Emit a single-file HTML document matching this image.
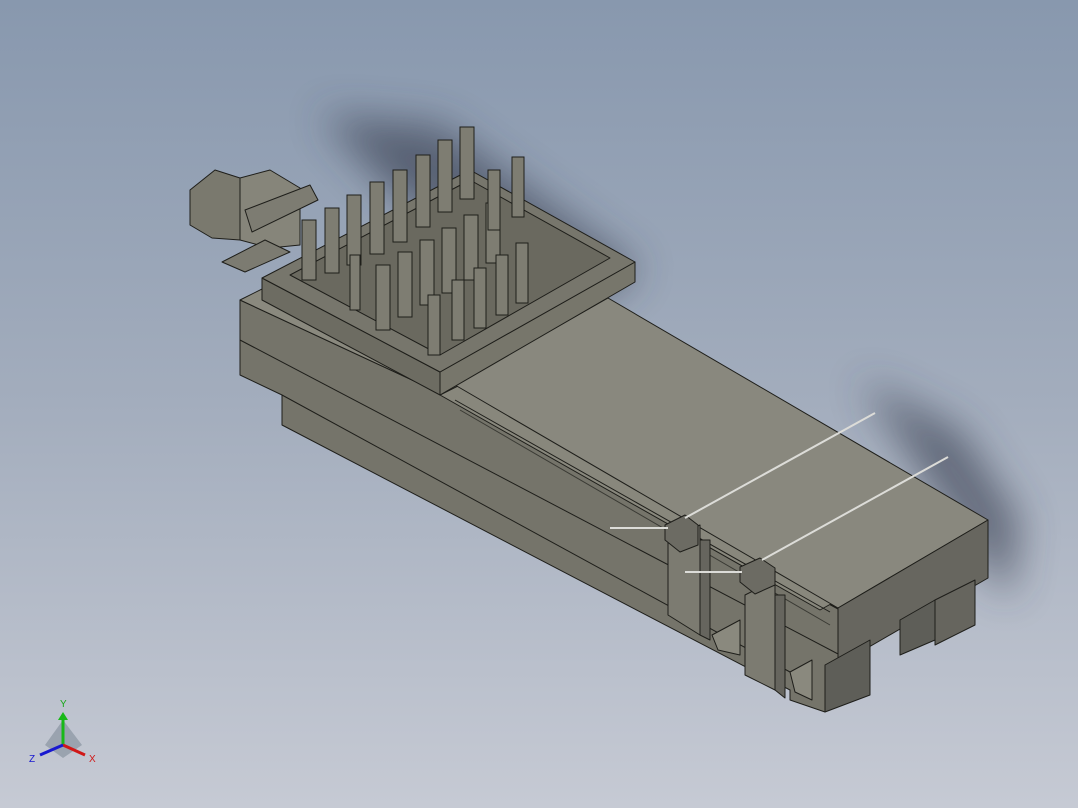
<!DOCTYPE html><html><head><style>html,body{margin:0;padding:0;width:1078px;height:808px;overflow:hidden}</style></head><body>
<svg width="1078" height="808" viewBox="0 0 1078 808" xmlns="http://www.w3.org/2000/svg" font-family="Liberation Sans, sans-serif">
<defs>
<linearGradient id="bg" x1="0" y1="0" x2="0" y2="1"><stop offset="0" stop-color="#8898ae"/><stop offset="0.5" stop-color="#a3adbd"/><stop offset="1" stop-color="#c6cad4"/></linearGradient>
<filter id="bl" x="-50%" y="-50%" width="200%" height="200%"><feGaussianBlur stdDeviation="20"/></filter>
</defs>
<rect width="1078" height="808" fill="url(#bg)"/>
<!-- shadow -->
<g filter="url(#bl)" opacity="0.6">
<polygon points="320,115 440,125 640,270 600,300 400,200" fill="#30384a"/>
<polygon points="860,380 960,430 1020,520 1010,600 980,560" fill="#30384a"/>
</g>
<g stroke="#1e1e1a" stroke-width="1" stroke-linejoin="round">
<polygon points="240,300 455,400 840,610 840,665 825,672 825,712 790,700 790,690 282,425 282,395 240,375" fill="#75746a"/>
<polyline points="240,340 840,655" fill="none"/>
<polyline points="282,395 790,672" fill="none"/>
<polygon points="240,300 270,285 455,385 838,608 840,610 455,400" fill="#8a897e"/>
<polygon points="440,395 470,380 838,600 820,610" fill="#88877c"/>
<polyline points="455,400 830,612" fill="none"/>
<polyline points="460,410 830,625" fill="none" stroke="#3a3a34"/>
<polygon points="455,385 608,298 988,520 838,608" fill="#89887e"/>
<polygon points="838,608 988,520 988,578 838,665" fill="#67665f"/>
<polygon points="825,665 870,640 870,695 825,712" fill="#5e5e58"/>
<polygon points="900,620 935,600 935,640 900,655" fill="#5e5e58"/>
<polygon points="935,600 975,580 975,625 935,645" fill="#66655e"/>
<polygon points="668,540 700,525 700,635 668,615" fill="#7c7b71"/>
<polygon points="700,540 710,540 710,640 700,635" fill="#66655e"/>
<polygon points="745,595 775,580 775,690 745,675" fill="#7c7b71"/>
<polygon points="775,595 785,595 785,698 775,690" fill="#66655e"/>
<polygon points="712,635 740,620 740,655 718,650" fill="#8a897e"/>
<polygon points="790,672 812,660 812,700 795,692" fill="#8a897e"/>
<polygon points="665,525 685,515 698,525 698,545 680,552 665,540" fill="#6c6b63"/>
<polygon points="740,567 760,558 775,568 775,585 755,594 740,582" fill="#6c6b63"/>
<polygon points="262,278 440,372 440,395 262,300" fill="#6d6c62"/>
<polygon points="440,372 635,262 635,282 440,395" fill="#77766b"/>
<polygon points="262,278 470,170 635,262 440,372" fill="#77766c"/>
<polygon points="290,275 470,180 610,258 440,355" fill="#6a695f"/>
<polygon points="190,190 215,170 240,178 240,240 212,238 190,225" fill="#7a796e"/>
<polygon points="240,178 270,170 300,188 300,245 270,248 240,240" fill="#86857a"/>
<polygon points="245,210 310,185 318,200 252,232" fill="#7d7c72"/>
<polygon points="222,262 265,240 290,252 245,272" fill="#7c7b71"/>
</g>
<g stroke="#dcdcd8" stroke-width="2">
<line x1="685" y1="518" x2="875" y2="413"/><line x1="762" y1="560" x2="948" y2="457"/>
<line x1="610" y1="528" x2="668" y2="528"/><line x1="685" y1="572" x2="742" y2="572"/>
</g>
<g stroke="#1e1e1a" stroke-width="1" fill="#7e7d72">
<rect x="302" y="220" width="14" height="60"/><rect x="325" y="208" width="14" height="65"/>
<rect x="347" y="195" width="14" height="70"/><rect x="370" y="182" width="14" height="72"/>
<rect x="393" y="170" width="14" height="72"/><rect x="416" y="155" width="14" height="72"/>
<rect x="438" y="140" width="14" height="72"/><rect x="460" y="127" width="14" height="72"/>
<rect x="376" y="265" width="14" height="65"/><rect x="398" y="252" width="14" height="65"/>
<rect x="420" y="240" width="14" height="65"/><rect x="442" y="228" width="14" height="65"/>
<rect x="464" y="215" width="14" height="65"/><rect x="486" y="203" width="14" height="60"/>
<rect x="350" y="255" width="10" height="55"/><rect x="428" y="295" width="12" height="60"/>
<rect x="452" y="280" width="12" height="60"/><rect x="474" y="268" width="12" height="60"/>
<rect x="496" y="255" width="12" height="60"/><rect x="516" y="243" width="12" height="60"/>
<rect x="488" y="170" width="12" height="60"/><rect x="512" y="157" width="12" height="60"/>
</g>
<g>
<polygon points="45,745 63,720 82,745 63,758" fill="#909aa6" opacity="0.8"/>
<line x1="63" y1="745" x2="63" y2="718" stroke="#18b818" stroke-width="3"/>
<polygon points="58,720 68,720 63,712" fill="#18b818"/>
<line x1="63" y1="745" x2="85" y2="755" stroke="#d01818" stroke-width="3"/>
<line x1="63" y1="745" x2="40" y2="755" stroke="#1818d0" stroke-width="3"/>
<text x="60" y="707" font-size="10" fill="#18a818">Y</text>
<text x="89" y="762" font-size="10" fill="#d01818">X</text>
<text x="29" y="762" font-size="10" fill="#1818d0">Z</text>
</g>
</svg>
</body></html>
